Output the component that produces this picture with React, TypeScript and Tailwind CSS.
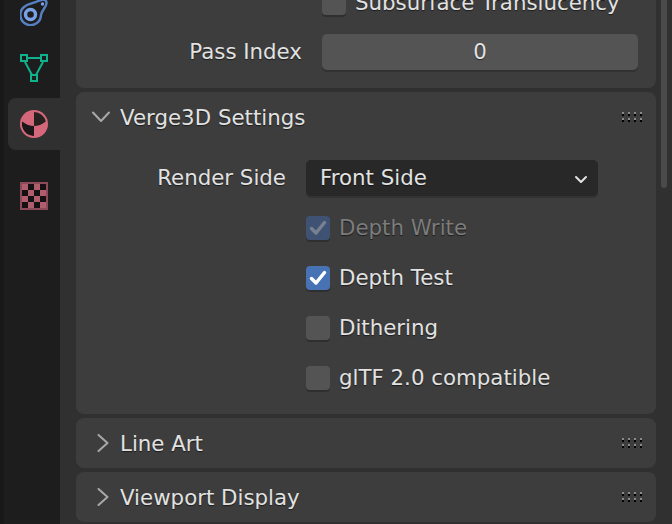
const FONT = "font-['DejaVu_Sans',sans-serif]";
const SHADOW = "[text-shadow:0_1px_1px_rgba(0,0,0,0.55)]";
const LABEL = `text-[21.33px] leading-6 ${SHADOW}`;

function Grip() {
  const xs = [0, 6, 12, 18];
  const ys = [0, 6];
  return (
    <svg width="21" height="10" viewBox="0 0 21 10" className="shrink-0">
      {xs.map((x) =>
        ys.map((y) => (
          <g key={`${x}-${y}`}>
            <rect x={x + 1} y={y + 2} width="2" height="2" fill="#000" />
            <rect x={x + 1} y={y} width="2" height="2" fill="#8a8a8a" />
          </g>
        ))
      )}
    </svg>
  );
}

function Chevron({ open }: { open?: boolean }) {
  return (
    <svg width="18" height="18" viewBox="0 0 18 18" className="shrink-0" fill="none" stroke="#a8a8a8" strokeWidth="2" strokeLinecap="round" strokeLinejoin="round">
      {open ? <path d="M1 4.500L9 13L17 4.500" /> : <path d="M6.500 1L15.500 9L6.500 17" />}
    </svg>
  );
}

function Checkbox({ checked, dim }: { checked?: boolean; dim?: boolean }) {
  const bg = checked ? (dim ? "bg-[#3f5273]" : "bg-[#4772b3]") : "bg-[#545454]";
  return (
    <div className={`w-6 h-6 rounded-[4px] shrink-0 flex items-center justify-center shadow-[0_2px_0_#2f2f2f] ${bg}`}>
      {checked && (
        <svg width="18" height="18" viewBox="0 0 18 18" fill="none" stroke={dim ? "#76808f" : "#fff"} strokeWidth="3.500" strokeLinecap="round" strokeLinejoin="round">
          <path d="M2.500 9.500l4.500 4.500 8.500-10.500" />
        </svg>
      )}
    </div>
  );
}

function CheckRow({ label, checked, dim }: { label: string; checked?: boolean; dim?: boolean }) {
  return (
    <div className="h-6 flex items-center gap-[9px] pl-[230px]">
      <Checkbox checked={checked} dim={dim} />
      <span className={`${LABEL} ${dim ? "text-[#7c7c7c]" : "text-[#e2e2e2]"}`}>{label}</span>
    </div>
  );
}

function PanelHeader({ title, open }: { title: string; open?: boolean }) {
  return (
    <div className="h-[50px] flex items-center pl-4 pr-[14px]">
      <Chevron open={open} />
      <span className={`ml-[10px] pt-[2px] flex-1 ${LABEL} text-[#e2e2e2]`}>{title}</span>
      <Grip />
    </div>
  );
}

function ObjectIcon() {
  return (
    <svg width="28" height="30" viewBox="0 -4 28 30" fill="none" className="shrink-0">
      <path d="M4 7C8 3.500 14 3 17 1.500C22-1 27-1 26.500 3.500C26.200 7 22 10 21 15A10.300 10.300 0 1 1 4 7Z" stroke="#5680c2" strokeWidth="2.400" />
      <circle cx="10.500" cy="14.500" r="5" stroke="#79a2e6" strokeWidth="3.500" />
      <circle cx="22.500" cy="4" r="1.700" fill="#79a2e6" />
    </svg>
  );
}

function MeshIcon() {
  return (
    <svg width="28" height="28" viewBox="0 0 28 28" fill="none" stroke="#0fb28c" strokeWidth="2">
      <path d="M7 4h14M5 8l7 13M23 8l-7 13" />
      <rect x="1" y="1" width="6" height="6" />
      <rect x="21" y="1" width="6" height="6" />
      <rect x="11" y="21" width="6" height="6" />
    </svg>
  );
}

function MaterialIcon() {
  return (
    <svg width="28" height="28" viewBox="0 0 28 28">
      <circle cx="14" cy="14" r="14" fill="#d4687a" />
      <path d="M14 2A12 12 0 0 1 25.800 11.500Q20 16 14 16Z" fill="#26211f" />
      <path d="M14 16Q8 16 2.200 11.500A12 12 0 0 0 14 26Z" fill="#1c1718" />
    </svg>
  );
}

function TextureIcon() {
  return (
    <svg width="28" height="28" viewBox="0 0 28 28">
      <rect width="28" height="28" fill="#b05d6d" />
      <rect x="1" y="1" width="26" height="26" fill="none" stroke="#8d4a58" strokeWidth="2" />
      {[[8, 2], [20, 2], [2, 8], [14, 8], [8, 14], [20, 14], [2, 20], [14, 20]].map(([x, y]) => (
        <rect key={`${x}-${y}`} x={x} y={y} width="6" height="6" fill="#151113" />
      ))}
    </svg>
  );
}

export default function App() {
  return (
    <div className={`relative w-[672px] h-[524px] overflow-hidden flex bg-[#303030] ${FONT}`}>
      {/* tabs */}
      <div className="w-[60px] shrink-0 bg-[#1d1d1d] border-l-4 border-[#181818] pl-1 flex flex-col">
        <div className="h-[26px] flex items-end justify-center">
          <ObjectIcon />
        </div>
        <div className="h-[72px] pt-[12px] flex items-center justify-center">
          <MeshIcon />
        </div>
        <div className="h-[52px] rounded-l-lg bg-[#303030] flex items-center justify-center">
          <MaterialIcon />
        </div>
        <div className="h-[92px] flex items-center justify-center">
          <TextureIcon />
        </div>
      </div>

      {/* panels */}
      <div className="w-[596px] shrink-0 pl-4 flex flex-col gap-1">
        <div className="h-[88px] shrink-0 rounded-b-lg bg-[#3d3d3d] overflow-hidden">
          <div className="h-6 -mt-[9px] flex items-center gap-[9px] pl-[246px]">
            <Checkbox />
            <span className={`${LABEL} text-[#e2e2e2]`}>Subsurface Translucency</span>
          </div>
          <div className="mt-[19px] flex items-center">
            <span className={`w-[226px] text-right ${LABEL} text-[#e2e2e2]`}>Pass Index</span>
            <div className={`ml-5 w-[316px] h-9 rounded-[5px] bg-[#545454] shadow-[0_2px_0_#313131] flex items-center justify-center ${LABEL} text-[#e2e2e2]`}>0</div>
          </div>
        </div>

        <div className="h-[322px] shrink-0 rounded-lg bg-[#3d3d3d]">
          <PanelHeader title="Verge3D Settings" open />
          <div className="mt-[18px] flex items-center">
            <span className={`w-[210px] text-right ${LABEL} text-[#e2e2e2]`}>Render Side</span>
            <div className={`ml-5 w-[292px] h-9 rounded-[5px] bg-[#282828] shadow-[0_2px_0_#333333] flex items-center justify-between pl-[14px] pr-[10px] ${LABEL} text-[#e2e2e2]`}>
              <span>Front Side</span>
              <svg width="14" height="10" viewBox="0 0 14 10" className="mt-[3px]" fill="none" stroke="#e2e2e2" strokeWidth="2" strokeLinecap="round" strokeLinejoin="round">
                <path d="M2 2l5 5 5-5" />
              </svg>
            </div>
          </div>
          <div className="mt-[20px] flex flex-col gap-[26px]">
            <CheckRow label="Depth Write" checked dim />
            <CheckRow label="Depth Test" checked />
            <CheckRow label="Dithering" />
            <CheckRow label="glTF 2.0 compatible" />
          </div>
        </div>

        <div className="h-[50px] shrink-0 rounded-lg bg-[#3d3d3d]">
          <PanelHeader title="Line Art" />
        </div>
        <div className="h-[50px] shrink-0 rounded-lg bg-[#3d3d3d]">
          <PanelHeader title="Viewport Display" />
        </div>
      </div>

      {/* scrollbar sits over the region edge */}
      <div className="absolute left-[661px] top-0 w-[6px] h-[188px] rounded-b-[3px] bg-[#4a4a4a]" />
    </div>
  );
}
